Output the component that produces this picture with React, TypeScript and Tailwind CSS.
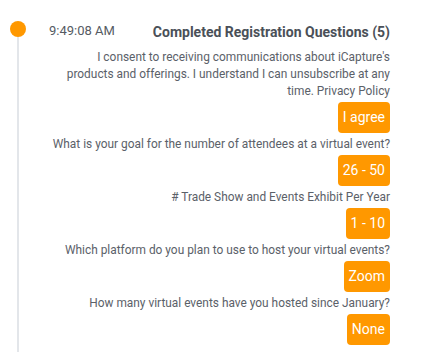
const answers = [
  {
    q: "I consent to receiving communications about iCapture's products and offerings. I understand I can unsubscribe at any time. Privacy Policy",
    a: "I agree",
  },
  { q: "What is your goal for the number of attendees at a virtual event?", a: "26 - 50" },
  { q: "# Trade Show and Events Exhibit Per Year", a: "1 - 10" },
  { q: "Which platform do you plan to use to host your virtual events?", a: "Zoom" },
  { q: "How many virtual events have you hosted since January?", a: "None" },
];

export default function App() {
  return (
    <div className="h-[352px] w-[427px] overflow-hidden bg-white font-['Roboto',sans-serif]">
      <div className="flex h-full pl-[10px] pt-[21px] pr-[37px]">
        <div className="flex w-4 shrink-0 flex-col items-center">
          <div className="h-4 w-4 rounded-full bg-[#ff9800]" />
          <div className="w-[2px] flex-1 bg-[#e3e6ea]" />
        </div>
        <div className="ml-[23px] flex-1">
          <div className="flex items-start justify-between">
            <span className="text-[13px] leading-[20px] text-[#555b63]">9:49:08 AM</span>
            <span className="mt-[1px] text-[14px] font-bold leading-[20px] text-[#4a5058]">
              Completed Registration Questions (5)
            </span>
          </div>
          <div className="mt-[7px] flex flex-col items-end text-right">
            {answers.map((item) => (
              <div key={item.a} className="flex flex-col items-end">
                <p className="text-[11.9px] leading-[17px] text-[#5b6169]">{item.q}</p>
                <span className="mt-[2px] mb-[3px] flex h-[31px] items-center rounded-[4px] bg-[#ff9800] px-[5px] text-[14px] text-white">
                  {item.a}
                </span>
              </div>
            ))}
          </div>
        </div>
      </div>
    </div>
  );
}
